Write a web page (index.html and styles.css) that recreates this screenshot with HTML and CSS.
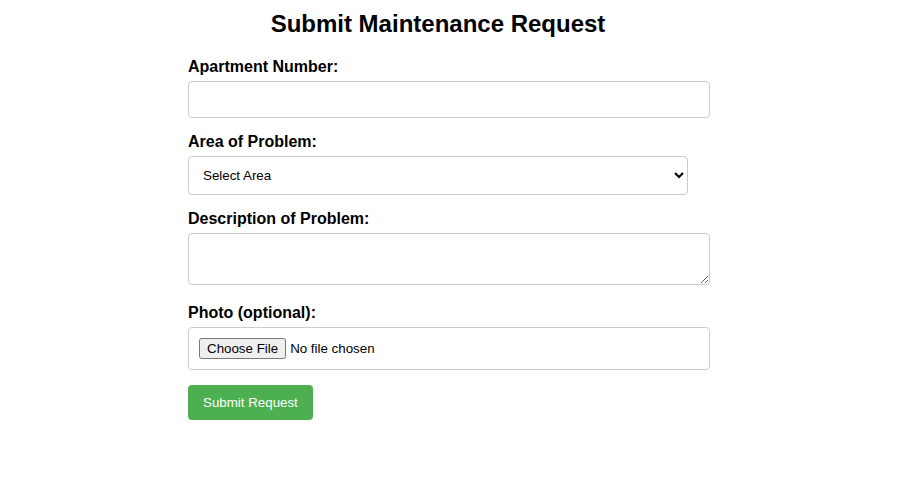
FILE: index.html
```html
<!DOCTYPE html>
<html lang="en">
<head>
<meta charset="utf-8">
<title>Submit Maintenance Request</title>
<link rel="stylesheet" href="styles.css">
</head>
<body>
<div class="container">
  <h2 class="title">Submit Maintenance Request</h2>
  <form class="form">
    <label class="label" for="apt">Apartment Number:</label>
    <input class="field" type="text" id="apt">
    <label class="label" for="area">Area of Problem:</label>
    <select class="select" id="area">
      <option>Select Area</option>
      <option>Kitchen</option>
      <option>Bathroom</option>
      <option>Bedroom</option>
      <option>Living Room</option>
      <option>Other</option>
    </select>
    <label class="label" for="desc">Description of Problem:</label>
    <textarea class="field area-text" id="desc"></textarea>
    <label class="label" for="photo">Photo (optional):</label>
    <input class="field file" type="file" id="photo">
    <button class="submit" type="button">Submit Request</button>
  </form>
</div>
</body>
</html>
```
FILE: styles.css
```css
body {
  margin: 0;
  font-family: "Liberation Sans", Arial, sans-serif;
  background: #fff;
  color: #000;
}
.container {
  width: 500px;
  margin: 0 auto;
  padding: 10px 44px 0 0;
}
.title {
  margin: 0 0 20px;
  font-size: 24px;
  font-weight: bold;
  text-align: center;
}
.form {
  display: flex;
  flex-direction: column;
  align-items: flex-start;
}
.label {
  display: block;
  font-size: 16px;
  font-weight: bold;
  margin-bottom: 5px;
}
.field {
  box-sizing: content-box;
  width: 500px;
  padding: 10px;
  border: 1px solid #ccc;
  border-radius: 4px;
  font-family: "Liberation Sans", Arial, sans-serif;
  font-size: 13.333px;
  margin: 0 0 15px;
}
.area-text {
  font-family: "Liberation Mono", monospace;
  height: 30px;
  margin-bottom: 19px;
}
.file {
  height: 21px;
  background: #fff;
  margin-bottom: 15px;
}
.select {
  box-sizing: border-box;
  width: 500px;
  padding: 10px;
  border: 1px solid #ccc;
  border-radius: 4px;
  background: #fff;
  font-family: "Liberation Sans", Arial, sans-serif;
  font-size: 13.333px;
  margin: 0 0 15px;
}
.submit {
  background: #4caf50;
  color: #fff;
  border: none;
  border-radius: 4px;
  padding: 10px 15px;
  font-family: "Liberation Sans", Arial, sans-serif;
  font-size: 13.333px;
  cursor: pointer;
}
```
